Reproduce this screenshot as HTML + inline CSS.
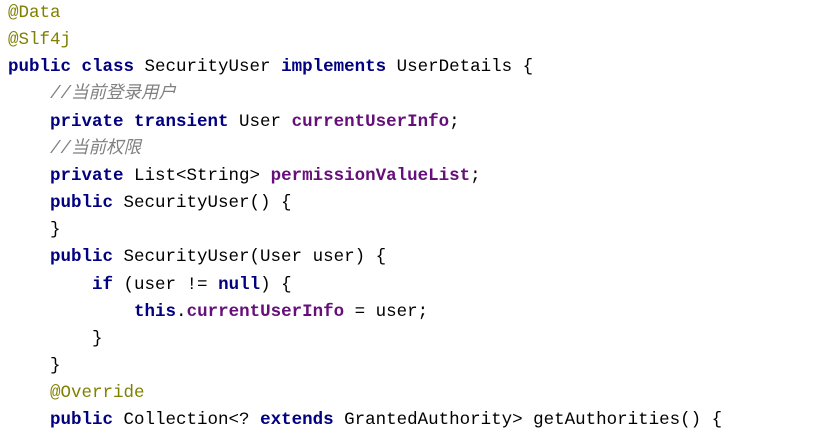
<!DOCTYPE html>
<html><head><meta charset="utf-8"><style>
body{margin:0;background:#fff;width:816px;height:429px;overflow:hidden}
pre{margin:0;position:absolute;left:8px;top:0px;font-family:"Liberation Mono","Noto Sans CJK SC",monospace;font-size:17.5px;line-height:27.15px;color:#000}
.a{color:#808000}.k{color:#000080;font-weight:bold}.c{color:#808080;font-style:italic;font-family:"Liberation Mono","Noto Sans CJK SC",monospace}.f{color:#660e7a;font-weight:bold}
</style></head><body><pre><span class="a">@Data</span>
<span class="a">@Slf4j</span>
<span class="k">public class</span> SecurityUser <span class="k">implements</span> UserDetails {
    <span class="c">//当前登录用户</span>
    <span class="k">private transient</span> User <span class="f">currentUserInfo</span>;
    <span class="c">//当前权限</span>
    <span class="k">private</span> List&lt;String&gt; <span class="f">permissionValueList</span>;
    <span class="k">public</span> SecurityUser() {
    }
    <span class="k">public</span> SecurityUser(User user) {
        <span class="k">if</span> (user != <span class="k">null</span>) {
            <span class="k">this</span>.<span class="f">currentUserInfo</span> = user;
        }
    }
    <span class="a">@Override</span>
    <span class="k">public</span> Collection&lt;? <span class="k">extends</span> GrantedAuthority&gt; getAuthorities() {
</pre></body></html>
